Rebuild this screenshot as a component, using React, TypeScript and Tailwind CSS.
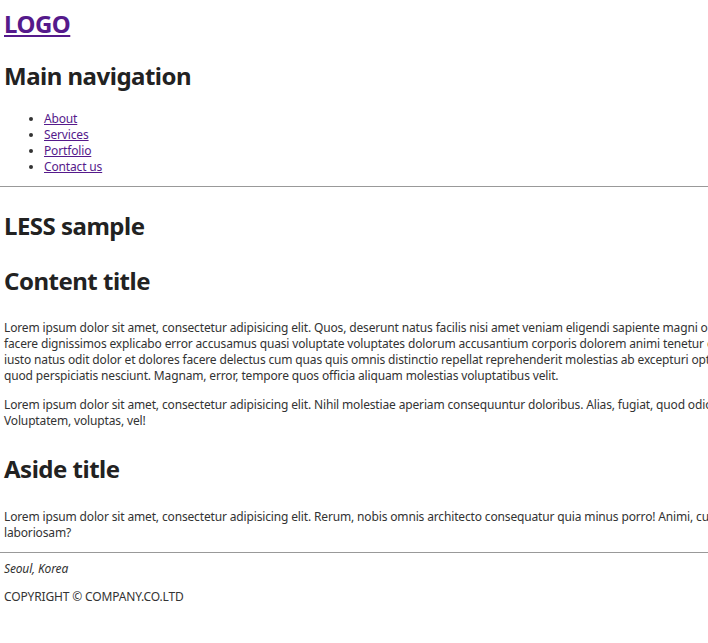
import React from "react";

const F = { fontFamily: '"Noto Sans", "Liberation Sans", sans-serif' };

function Lines({ lines }: { lines: string[] }) {
  return (
    <p className="text-[12px] leading-[16px] text-[#333] whitespace-nowrap tracking-[-0.15px]">
      {lines.map((l, i) => (
        <span key={i} className="block">
          {l}
        </span>
      ))}
    </p>
  );
}

export default function App() {
  return (
    <div className="w-[708px] h-[643px] overflow-hidden bg-white" style={F}>
      <div className="px-[4px]">
        <header>
          <h1 className="pt-[8px] text-[24px] leading-[32px] font-bold tracking-[-0.5px]">
            <a href="#" className="text-[#551a8b] underline">LOGO</a>
          </h1>
          <h2 className="mt-[20px] text-[24px] leading-[32px] font-bold text-[#222] tracking-[-0.5px]">Main navigation</h2>
          <ul className="mt-[19px] pl-[40px] list-disc text-[12px] leading-[16px] text-[#333] tracking-[-0.15px]">
            <li><a href="#" className="text-[#551a8b] underline">About</a></li>
            <li><a href="#" className="text-[#551a8b] underline">Services</a></li>
            <li><a href="#" className="text-[#551a8b] underline">Portfolio</a></li>
            <li><a href="#" className="text-[#551a8b] underline">Contact us</a></li>
          </ul>
        </header>
        <hr className="mt-[11px] -mx-[4px] w-[720px] border-t border-[#999]" />
        <h2 className="mt-[23px] text-[24px] leading-[32px] font-bold text-[#222] tracking-[-0.5px]">LESS sample</h2>
        <h2 className="mt-[23px] text-[24px] leading-[32px] font-bold text-[#222] tracking-[-0.5px]">Content title</h2>
        <div className="mt-[23px]">
          <Lines
            lines={[
              "Lorem ipsum dolor sit amet, consectetur adipisicing elit. Quos, deserunt natus facilis nisi amet veniam eligendi sapiente magni odio",
              "facere dignissimos explicabo error accusamus quasi voluptate voluptates dolorum accusantium corporis dolorem animi tenetur cum",
              "iusto natus odit dolor et dolores facere delectus cum quas quis omnis distinctio repellat reprehenderit molestias ab excepturi optio",
              "quod perspiciatis nesciunt. Magnam, error, tempore quos officia aliquam molestias voluptatibus velit.",
            ]}
          />
        </div>
        <div className="mt-[13px]">
          <Lines
            lines={[
              "Lorem ipsum dolor sit amet, consectetur adipisicing elit. Nihil molestiae aperiam consequuntur doloribus. Alias, fugiat, quod odio",
              "Voluptatem, voluptas, vel!",
            ]}
          />
        </div>
        <h2 className="mt-[24px] text-[24px] leading-[32px] font-bold text-[#222] tracking-[-0.5px]">Aside title</h2>
        <div className="mt-[24px]">
          <Lines
            lines={[
              "Lorem ipsum dolor sit amet, consectetur adipisicing elit. Rerum, nobis omnis architecto consequatur quia minus porro! Animi, cum",
              "laboriosam?",
            ]}
          />
        </div>
        <hr className="mt-[11px] -mx-[4px] w-[720px] border-t border-[#999]" />
        <footer className="text-[12px] leading-[16px] text-[#333] tracking-[-0.15px]">
          <p className="mt-[8px] italic">Seoul, Korea</p>
          <p className="mt-[12px]">COPYRIGHT © COMPANY.CO.LTD</p>
        </footer>
      </div>
    </div>
  );
}
